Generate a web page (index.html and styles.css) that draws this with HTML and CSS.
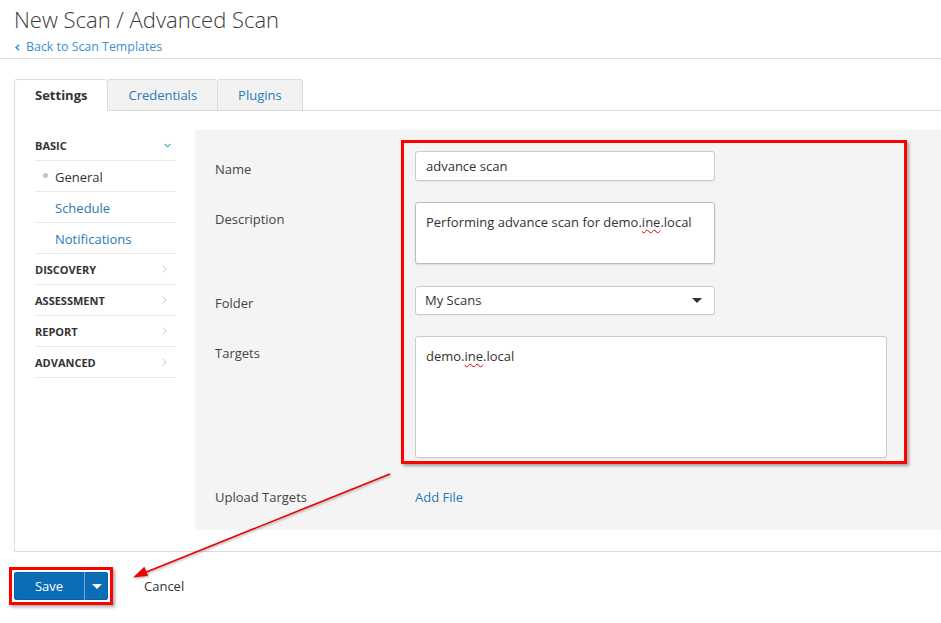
FILE: index.html
```html
<!DOCTYPE html>
<html lang="en">
<head>
<meta charset="utf-8">
<title>New Scan / Advanced Scan</title>
<link rel="stylesheet" href="styles.css">
</head>
<body>
<header class="page-head">
  <h1 class="title">New Scan / Advanced Scan</h1>
  <a class="back-link" href="#"><svg class="back-chev" width="5" height="7" viewBox="0 0 5 7"><path d="M4 0.8 L1.2 3.5 L4 6.2" fill="none" stroke="currentColor" stroke-width="1.6"/></svg>Back to Scan Templates</a>
</header>

<main class="editor">
  <nav class="tabs">
    <div class="tab active">Settings</div>
    <div class="tab">Credentials</div>
    <div class="tab last">Plugins</div>
  </nav>

  <section class="panel">
    <aside class="side-nav">
      <div class="nav-row nav-head">BASIC<svg class="chev-down" width="7" height="5" viewBox="0 0 7 5"><path d="M0.6 0.8 L3.5 3.8 L6.4 0.8" fill="none" stroke="currentColor" stroke-width="1.1"/></svg></div>
      <div class="nav-row nav-sub current"><span class="dot"></span>General</div>
      <div class="nav-row nav-sub link">Schedule</div>
      <div class="nav-row nav-sub link">Notifications</div>
      <div class="nav-row nav-head">DISCOVERY<svg class="chev-right" width="5" height="8" viewBox="0 0 5 8"><path d="M0.8 0.6 L4 4 L0.8 7.4" fill="none" stroke="currentColor" stroke-width="1"/></svg></div>
      <div class="nav-row nav-head">ASSESSMENT<svg class="chev-right" width="5" height="8" viewBox="0 0 5 8"><path d="M0.8 0.6 L4 4 L0.8 7.4" fill="none" stroke="currentColor" stroke-width="1"/></svg></div>
      <div class="nav-row nav-head">REPORT<svg class="chev-right" width="5" height="8" viewBox="0 0 5 8"><path d="M0.8 0.6 L4 4 L0.8 7.4" fill="none" stroke="currentColor" stroke-width="1"/></svg></div>
      <div class="nav-row nav-head">ADVANCED<svg class="chev-right" width="5" height="8" viewBox="0 0 5 8"><path d="M0.8 0.6 L4 4 L0.8 7.4" fill="none" stroke="currentColor" stroke-width="1"/></svg></div>
    </aside>

    <div class="form-area">
      <div class="form-row first">
        <div class="label">Name</div>
        <div class="field input">advance scan</div>
      </div>
      <div class="form-row row-desc">
        <div class="label">Description</div>
        <div class="field textarea desc">Performing advance scan for demo.<span class="spell">ine</span>.local</div>
      </div>
      <div class="form-row">
        <div class="label">Folder</div>
        <div class="field select">My Scans<span class="caret"></span></div>
      </div>
      <div class="form-row">
        <div class="label">Targets</div>
        <div class="field textarea targets">demo.<span class="spell">ine</span>.local</div>
      </div>
      <div class="form-row">
        <div class="label">Upload Targets</div>
        <a class="label link add-file" href="#">Add File</a>
      </div>
    </div>
  </section>

  <div class="actions">
    <div class="split-btn">
      <span class="btn-main">Save</span>
      <span class="btn-caret"><span class="caret white"></span></span>
    </div>
    <a class="cancel" href="#">Cancel</a>
  </div>
</main>

<div class="hl hl-form"></div>
<div class="hl hl-save"></div>
<svg class="arrow" width="941" height="623" viewBox="0 0 941 623">
  <line x1="390" y1="474" x2="144" y2="573" stroke="#ee0000" stroke-width="1.6"/>
  <polygon points="133,577.5 148,575.8 144.3,566.8" fill="#ee0000"/>
</svg>
</body>
</html>
```

FILE: styles.css
```css
* { box-sizing: border-box; }

html, body {
  margin: 0;
  background: #fff;
}

body {
  font-family: "Open Sans", "Liberation Sans", sans-serif;
  font-size: 13px;
  color: #333;
  position: relative;
  min-height: 623px;
  overflow: hidden;
}

a { text-decoration: none; }

/* header */
.page-head {
  height: 59px;
  padding: 4px 14px 0;
  border-bottom: 1px solid #dcdcdc;
}

.title {
  margin: 0;
  font-size: 22px;
  font-weight: 300;
  line-height: 30px;
  color: #3a3a3a;
}

.back-link {
  display: inline-flex;
  align-items: center;
  margin-top: 4px;
  font-size: 12.4px;
  line-height: 18px;
  color: #3d8fd1;
}

.back-chev {
  margin: 0 6px 0 1px;
  color: #3d8fd1;
}

/* tabs */
.tabs {
  display: flex;
  align-items: flex-end;
  margin: 20px 0 0 14px;
  border-bottom: 1px solid #dcdcdc;
}

.tab {
  height: 31px;
  padding: 0 20px;
  line-height: 30px;
  font-size: 13px;
  color: #2a7ab8;
  background: #f2f2f2;
  border: 1px solid #dcdcdc;
  border-bottom: 0;
  border-right: 0;
  border-radius: 3px 3px 0 0;
}

.tab.last { border-right: 1px solid #dcdcdc; }

.tab.active {
  height: 32px;
  margin-bottom: -1px;
  padding-bottom: 1px;
  background: #fff;
  color: #333;
  font-weight: 700;
}

/* panel */
.panel {
  display: flex;
  gap: 19px;
  margin-left: 14px;
  padding: 19px 0 21px 20px;
  border-left: 1px solid #dcdcdc;
  border-bottom: 1px solid #dcdcdc;
}

.side-nav {
  width: 141px;
  flex: none;
}

.nav-row {
  height: 31px;
  display: flex;
  align-items: center;
  border-bottom: 1px dotted #d8d8d8;
}

.nav-head {
  justify-content: space-between;
  font-size: 11px;
  font-weight: 700;
  color: #333;
  padding-right: 5px;
}

.chev-down { color: #4d9fc4; }
.chev-right { color: #c8c8c8; margin-right: 4px; }

.nav-sub {
  padding-left: 8px;
  padding-top: 2px;
  font-size: 13px;
}

.nav-sub.link { padding-left: 20px; color: #2a7ab8; }

.dot {
  width: 5px;
  height: 5px;
  border-radius: 50%;
  background: #c4c4c4;
  margin-right: 7px;
  position: relative;
  top: -2px;
}

/* form */
.form-area {
  flex: 1;
  background: #f4f4f4;
  padding: 21px 0 24px 20px;
}

.form-row {
  display: grid;
  grid-template-columns: 200px auto;
  align-items: start;
  margin-bottom: 21px;
}

.form-row.row-desc { margin-bottom: 22px; }
.form-row:last-child { margin-bottom: 0; }

.label {
  padding-top: 8px;
  line-height: 18px;
  font-size: 13px;
  color: #444;
}

.form-row.first .label,
.form-row:last-child .label { padding-top: 9px; }

.link { color: #2a7ab8; }
.add-file { justify-self: start; }

.field {
  width: 300px;
  background: #fff;
  border: 1px solid #cbcbcb;
  border-radius: 3px;
  box-shadow: 0 1px 1px rgba(0, 0, 0, 0.06);
  font-size: 13px;
  color: #333;
}

.input {
  height: 30px;
  line-height: 28px;
  padding: 0 10px;
}

.textarea {
  padding: 10px 10px;
  line-height: 18px;
}

.desc {
  height: 62px;
  border-color: #bdbdbd;
  box-shadow: 0 1px 2px rgba(0, 0, 0, 0.12);
}

.targets {
  width: 472px;
  height: 122px;
}

.select {
  height: 29px;
  line-height: 27px;
  padding: 0 12px 0 9px;
  display: flex;
  justify-content: space-between;
  align-items: center;
}

.caret {
  width: 0;
  height: 0;
  border-left: 5px solid transparent;
  border-right: 5px solid transparent;
  border-top: 5px solid #333;
}

.caret.white { border-top-color: #fff; }

.spell {
  text-decoration: underline wavy #e00000;
  text-decoration-thickness: 1px;
  text-underline-offset: 2px;
}

/* actions */
.actions {
  display: flex;
  align-items: center;
  margin-top: 20px;
  padding-left: 14px;
}

.split-btn {
  display: flex;
  height: 28px;
  border-radius: 3px;
  overflow: hidden;
  background: #0b6db5;
  box-shadow: inset 0 0 0 1px #0a62a3;
}

.btn-main {
  width: 71px;
  line-height: 28px;
  text-align: center;
  color: #fff;
  font-size: 13px;
  border-right: 1px solid #6fa8d6;
}

.btn-caret {
  width: 23px;
  display: flex;
  align-items: center;
  justify-content: center;
}

.cancel {
  margin-left: 36px;
  color: #333;
  font-size: 13px;
}

/* annotation overlays */
.hl {
  position: absolute;
  border: 3px solid #ff0000;
  box-shadow: 2px 2px 3px rgba(0, 0, 0, 0.35);
  pointer-events: none;
}

.hl-form {
  left: 401px;
  top: 140px;
  width: 506px;
  height: 324px;
}

.hl-save {
  left: 9px;
  top: 567px;
  width: 104px;
  height: 38px;
}

.arrow {
  position: absolute;
  left: 0;
  top: 0;
  pointer-events: none;
  filter: drop-shadow(1px 1px 1px rgba(0, 0, 0, 0.35));
}
```
